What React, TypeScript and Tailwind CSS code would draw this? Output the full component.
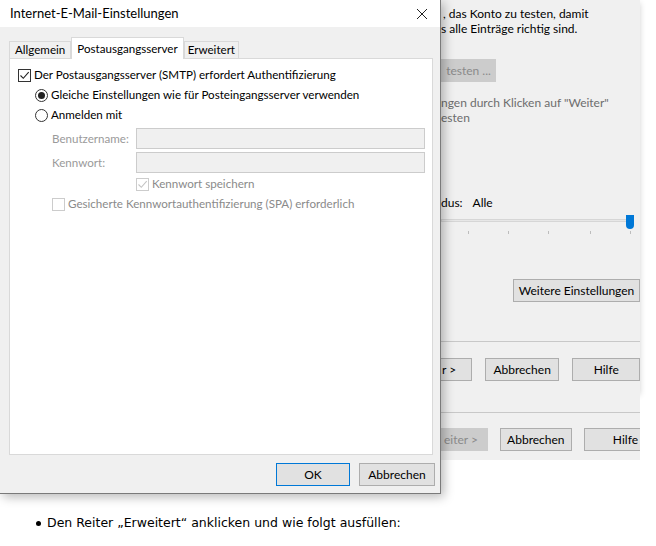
import React from 'react'

const UI = { fontFamily: 'Lato, "Noto Sans", sans-serif' }

function Check({ checked = false, disabled = false }: { checked?: boolean; disabled?: boolean }) {
  return (
    <span
      className={`grid h-[13px] w-[13px] shrink-0 place-items-center border bg-white ${
        disabled ? 'border-[#cccccc]' : 'border-[#333333]'
      }`}
    >
      {checked && (
        <svg width="11" height="11" viewBox="0 0 11 11" fill="none">
          <path d="M1.5 5.5l2.8 2.8 5.4-6.2" stroke={disabled ? '#c4c4c4' : '#222'} strokeWidth="1.1" />
        </svg>
      )}
    </span>
  )
}

function Radio({ checked = false }: { checked?: boolean }) {
  return (
    <span className="grid h-[13px] w-[13px] shrink-0 place-items-center rounded-full border border-[#333333] bg-white">
      {checked && <span className="h-[7px] w-[7px] rounded-full bg-[#222222]" />}
    </span>
  )
}

function WinButton({
  children,
  className = '',
  disabled = false,
  primary = false,
}: {
  children: React.ReactNode
  className?: string
  disabled?: boolean
  primary?: boolean
}) {
  return (
    <div
      className={`flex h-[23px] items-center whitespace-nowrap border text-[12px] ${
        disabled
          ? 'border-[#cccccc] bg-[#cccccc] text-[#8a8a8a]'
          : primary
          ? 'border-[#0078d7] bg-[#e1e1e1] text-black'
          : 'border-[#adadad] bg-[#e1e1e1] text-black'
      } ${className}`}
    >
      {children}
    </div>
  )
}

function FrontDialog() {
  return (
    <div className="relative z-10 flex w-[441px] shrink-0 flex-col border-r border-b border-[#7a7a7a] bg-[#f0f0f0] shadow-[3px_3px_10px_rgba(0,0,0,0.28)]">
      <div className="flex h-[27px] items-center justify-between bg-white pl-[10px] pr-[12px]">
        <span className="text-[13px] text-black">Internet-E-Mail-Einstellungen</span>
        <svg width="12" height="12" viewBox="0 0 12 12" fill="none">
          <path d="M1 1l10 10M11 1L1 11" stroke="#222" strokeWidth="1" />
        </svg>
      </div>

      <div className="px-[9px] pt-[9px]">
        <div className="flex items-end text-[11.6px] text-black">
          <div className="relative top-[1px] flex h-[18px] items-center border border-[#d9d9d9] bg-[#f0f0f0] px-[5px]">Allgemein</div>
          <div className="relative top-[1px] z-10 flex h-[22px] items-center border border-b-0 border-[#d9d9d9] bg-white px-[5px]">
            Postausgangsserver
          </div>
          <div className="relative top-[1px] flex h-[18px] items-center border border-[#d9d9d9] bg-[#f0f0f0] px-[3px]">Erweitert</div>
        </div>

        <div className="h-[397px] w-[424px] border border-[#d9d9d9] bg-white pl-[8px] pr-[7px] pt-[9px] text-[11.6px] leading-[14px]">
          <div className="flex h-[14px] items-center gap-[3px]">
            <Check checked />
            <span>Der Postausgangsserver (SMTP) erfordert Authentifizierung</span>
          </div>
          <div className="mt-[6px] flex h-[14px] items-center gap-[3px] pl-[17px]">
            <Radio checked />
            <span>Gleiche Einstellungen wie für Posteingangsserver verwenden</span>
          </div>
          <div className="mt-[6px] flex h-[14px] items-center gap-[3px] pl-[17px]">
            <Radio />
            <span>Anmelden mit</span>
          </div>

          <div className="mt-[6px] flex items-center pl-[34px] text-[#9a9a9a]">
            <span className="w-[84px] whitespace-nowrap">Benutzername:</span>
            <div className="h-[21px] flex-1 border border-[#cccccc] bg-[#f0f0f0]" />
          </div>
          <div className="mt-[3px] flex items-center pl-[34px] text-[#9a9a9a]">
            <span className="w-[84px]">Kennwort:</span>
            <div className="h-[21px] flex-1 border border-[#cccccc] bg-[#f0f0f0]" />
          </div>
          <div className="mt-[4px] flex h-[14px] items-center gap-[3px] pl-[118px] text-[#8a8a8a]">
            <Check checked disabled />
            <span>Kennwort speichern</span>
          </div>
          <div className="mt-[6px] flex h-[14px] items-center gap-[3px] pl-[34px] text-[#8a8a8a]">
            <Check disabled />
            <span>Gesicherte Kennwortauthentifizierung (SPA) erforderlich</span>
          </div>
        </div>
      </div>

      <div className="flex justify-end gap-[9px] pb-[7px] pr-[5px] pt-[8px]">
        <WinButton primary className="w-[74px] justify-center">
          OK
        </WinButton>
        <WinButton className="w-[76px] justify-center">Abbrechen</WinButton>
      </div>
    </div>
  )
}

function BackWindows() {
  return (
    <div className="flex w-[199px] shrink-0 flex-col text-[12px]">
      <div className="flex h-[392px] flex-col bg-[#f0f0f0] shadow-[0_3px_6px_rgba(0,0,0,0.18)]">
        <div className="pt-[6px] leading-[15px] text-black">
          <p className="pl-[2px]">, das Konto zu testen, damit</p>
          <p>s alle Einträge richtig sind.</p>
        </div>
        <WinButton disabled className="mt-[23px] w-[55px] justify-center">
          testen ...
        </WinButton>
        <div className="mt-[13px] leading-[15px] text-[#6d6d6d]">
          <p>ngen durch Klicken auf "Weiter"</p>
          <p>esten</p>
        </div>
        <div className="mt-[70px] flex gap-[10px] leading-[15px] text-black">
          <span>dus:</span>
          <span>Alle</span>
        </div>
        <div className="relative mt-[5px] h-[22px]">
          <div className="absolute left-0 top-[4px] h-[3px] w-[187px] border border-[#d6d6d6] bg-[#e7e7e7]" />
          <div className="absolute left-[185px] top-0 h-[14px] w-[8px] rounded-b-[4px] bg-[#0078d7]" />
          {[27, 67, 107, 149, 189].map((x) => (
            <div key={x} className="absolute top-[16px] h-[3px] w-px bg-[#bdbdbd]" style={{ left: x }} />
          ))}
        </div>
        <div className="mt-[42px] flex justify-end">
          <WinButton className="w-[127px] justify-center">Weitere Einstellungen</WinButton>
        </div>
        <div className="mt-[39px] border-t border-[#c8c8c8]" />
        <div className="mt-[16px] flex gap-[13px]">
          <WinButton className="w-[31px] border-l-0 pl-[1px]">r &gt;</WinButton>
          <WinButton className="w-[75px] justify-center">Abbrechen</WinButton>
          <WinButton className="w-[68px] justify-center">Hilfe</WinButton>
        </div>
      </div>
      <div className="flex h-[68px] flex-col bg-[#f0f0f0]">
        <div className="mt-[20px] border-t border-[#c8c8c8]" />
        <div className="mt-[15px] flex gap-[12px]">
          <WinButton disabled className="w-[50px] pl-[2px]">
            eiter &gt;
          </WinButton>
          <WinButton className="w-[76px] justify-center">Abbrechen</WinButton>
          <WinButton className="w-[60px] justify-end border-r-0 pr-[2px]">Hilfe</WinButton>
        </div>
      </div>
    </div>
  )
}

export default function App() {
  return (
    <div className="h-[546px] w-[656px] overflow-hidden bg-white" style={UI}>
      <div className="flex items-start">
        <FrontDialog />
        <BackWindows />
      </div>
      <ul className="mt-[20px] pl-[36px] text-[12.5px] text-black" style={{ fontFamily: '"DejaVu Sans", Verdana, sans-serif' }}>
        <li className="flex items-center gap-[6px]">
          <span className="h-[5px] w-[5px] rounded-full bg-black" />
          <span>Den Reiter „Erweitert“ anklicken und wie folgt ausfüllen:</span>
        </li>
      </ul>
    </div>
  )
}
